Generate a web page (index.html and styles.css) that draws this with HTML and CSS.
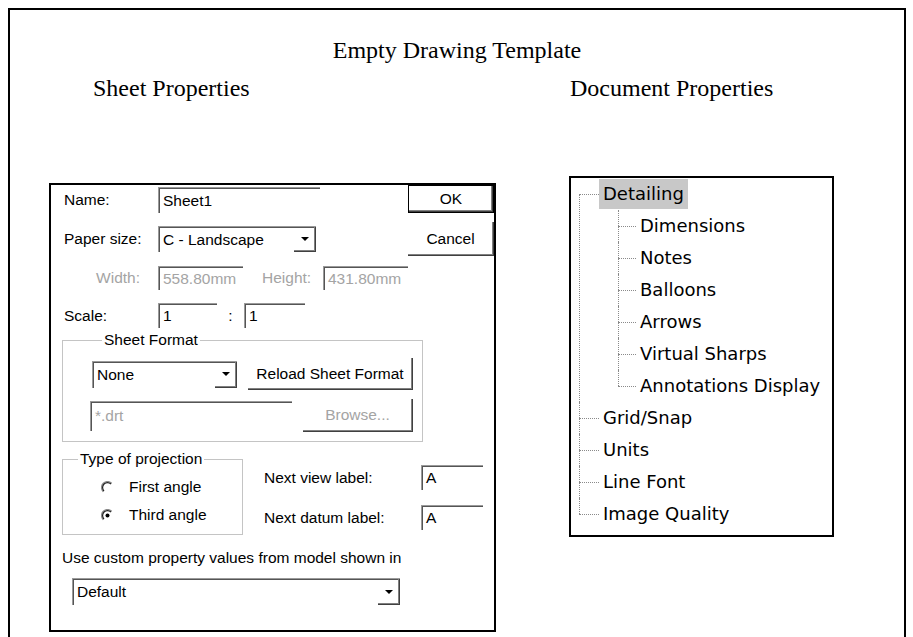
FILE: index.html
```html
<!DOCTYPE html>
<html>
<head>
<meta charset="utf-8">
<title>Empty Drawing Template</title>
<link rel="stylesheet" href="styles.css">
</head>
<body>
<div class="frame">
  <h1 class="title">Empty Drawing Template</h1>
  <div class="cols">
    <section class="col col-left">
      <h2 class="heading heading-left">Sheet Properties</h2>
      <div class="dlg">
        <div class="dlg-top">
          <div class="fields">
            <div class="row row-name">
              <span class="lbl">Name:</span>
              <span class="tb w-name">Sheet1</span>
            </div>
            <div class="row row-paper">
              <span class="lbl">Paper size:</span>
              <span class="dd w-paper"><span class="dd-text">C - Landscape</span><span class="dd-btn"><span class="arrow"></span></span></span>
            </div>
            <div class="row row-size dis">
              <span class="lbl-right">Width:</span>
              <span class="tb w-size">558.80mm</span>
              <span class="lbl-h">Height:</span>
              <span class="tb w-size">431.80mm</span>
            </div>
            <div class="row row-scale">
              <span class="lbl">Scale:</span>
              <span class="tb w-s1">1</span>
              <span class="colon">:</span>
              <span class="tb w-s2">1</span>
            </div>
          </div>
          <div class="btns">
            <div class="btn btn-ok">OK</div>
            <div class="btn btn-cancel">Cancel</div>
          </div>
        </div>
        <fieldset class="grp grp-sheet">
          <legend>Sheet Format</legend>
          <div class="grow grow1">
            <span class="dd w-none"><span class="dd-text">None</span><span class="dd-btn"><span class="arrow"></span></span></span>
            <span class="btn btn-reload">Reload Sheet Format</span>
          </div>
          <div class="grow grow2 dis">
            <span class="tb w-drt">*.drt</span>
            <span class="btn btn-browse">Browse...</span>
          </div>
        </fieldset>
        <div class="proj-row">
          <fieldset class="grp grp-proj">
            <legend>Type of projection</legend>
            <div class="radio">
              <svg class="rb" width="13" height="13" viewBox="0 0 13 13"><path d="M2.25 10.75 A6 6 0 0 1 10.75 2.25" fill="none" stroke="#8c8c8c" stroke-width="1.2"/><path d="M3 10 A4.95 4.95 0 0 1 10 3" fill="none" stroke="#202020" stroke-width="1.2"/></svg>
              <span>First angle</span>
            </div>
            <div class="radio">
              <svg class="rb" width="13" height="13" viewBox="0 0 13 13"><path d="M2.25 10.75 A6 6 0 0 1 10.75 2.25" fill="none" stroke="#8c8c8c" stroke-width="1.2"/><path d="M3 10 A4.95 4.95 0 0 1 10 3" fill="none" stroke="#202020" stroke-width="1.2"/><circle cx="6.5" cy="6.5" r="2" fill="#000"/></svg>
              <span>Third angle</span>
            </div>
          </fieldset>
          <div class="labels">
            <div class="lrow"><span class="lbl-next">Next view label:</span><span class="tb w-next">A</span></div>
            <div class="lrow lrow2"><span class="lbl-next">Next datum label:</span><span class="tb w-next">A</span></div>
          </div>
        </div>
        <p class="custom">Use custom property values from model shown in</p>
        <span class="dd w-default"><span class="dd-text">Default</span><span class="dd-btn"><span class="arrow"></span></span></span>
      </div>
    </section>
    <section class="col col-right">
      <h2 class="heading heading-right">Document Properties</h2>
      <div class="tree">
        <ul class="t1">
          <li><span class="node sel">Detailing</span>
            <ul class="t2">
              <li><span class="node">Dimensions</span></li>
              <li><span class="node">Notes</span></li>
              <li><span class="node">Balloons</span></li>
              <li><span class="node">Arrows</span></li>
              <li><span class="node">Virtual Sharps</span></li>
              <li><span class="node">Annotations Display</span></li>
            </ul>
          </li>
          <li><span class="node">Grid/Snap</span></li>
          <li><span class="node">Units</span></li>
          <li><span class="node">Line Font</span></li>
          <li><span class="node">Image Quality</span></li>
        </ul>
      </div>
    </section>
  </div>
</div>
</body>
</html>
```

FILE: styles.css
```css
html, body {
  margin: 0;
  padding: 0;
  background: #fff;
  overflow: hidden;
}
body {
  font-family: "Liberation Serif", "Times New Roman", serif;
  color: #000;
}
.frame {
  box-sizing: border-box;
  margin: 8px 0 0 8px;
  width: 898px;
  height: 629px;
  border: 2px solid #000;
  border-bottom: none;
}
.title {
  margin: 0;
  padding-top: 25px;
  font-size: 24px;
  font-weight: normal;
  line-height: 30px;
  text-align: center;
}
.cols {
  display: flex;
  align-items: flex-start;
  padding-left: 39px;
  margin-top: 8px;
}
.col-left { width: 447px; }
.col-right { width: 265px; margin-left: 73px; }
.heading {
  margin: 0;
  font-size: 24px;
  font-weight: normal;
  line-height: 30px;
}
.heading-left { margin-left: 44px; }
.heading-right { margin-left: 1px; }

/* dialog */
.dlg {
  box-sizing: border-box;
  width: 447px;
  margin-top: 80px;
  border: 2px solid #000;
  padding: 0 0 25px 11px;
  font-family: "Liberation Sans", Arial, sans-serif;
  font-size: 15.5px;
  line-height: 18px;
}
.dlg-top { display: flex; }
.fields { display: flex; flex-direction: column; }
.row { display: flex; align-items: center; }
.row-name { margin-top: 2px; height: 26px; }
.row-paper { margin-top: 13px; height: 26px; }
.row-size { margin-top: 14px; height: 24px; }
.row-scale { margin-top: 13px; height: 25px; }
.lbl { width: 94px; margin-left: 2px; }
.lbl-right { width: 76px; margin-left: 2px; margin-right: 18px; text-align: right; }
.lbl-h { width: 61px; margin-left: 19px; }
.colon { width: 27px; text-align: center; }
.dis { color: #a4a4a4; }

.tb {
  box-sizing: border-box;
  display: flex;
  align-items: center;
  border-top: 1px solid #9a9a9a;
  border-left: 1px solid #9a9a9a;
  box-shadow: inset 1px 1px 0 #555;
  padding-left: 4px;
  height: 100%;
  white-space: nowrap;
  overflow: hidden;
}
.w-name { width: 162px; height: 26px; }
.w-size { width: 85px; height: 24px; }
.w-s1 { width: 59px; height: 25px; }
.w-s2 { width: 61px; height: 25px; }
.w-drt { width: 202px; height: 30px; margin-left: -2px; }
.w-next { width: 62px; height: 25px; }

.dd {
  box-sizing: border-box;
  display: flex;
  border-top: 1px solid #9a9a9a;
  border-left: 1px solid #9a9a9a;
  box-shadow: inset 1px 1px 0 #555;
}
.dd-text { flex: 1; display: flex; align-items: center; padding-left: 4px; white-space: nowrap; }
.dd-btn {
  box-sizing: border-box;
  width: 22px;
  display: flex;
  align-items: center;
  justify-content: center;
  border-right: 1px solid #404040;
  border-bottom: 1px solid #404040;
  box-shadow: inset -1px -1px 0 #808080;
}
.arrow {
  width: 0;
  height: 0;
  border-left: 4px solid transparent;
  border-right: 4px solid transparent;
  border-top: 4px solid #000;
}
.w-paper { width: 158px; height: 26px; }
.w-none { width: 145px; height: 27px; }
.w-default { width: 328px; height: 27px; margin-left: 10px; }

.btn {
  box-sizing: border-box;
  display: flex;
  align-items: center;
  justify-content: center;
  border-right: 1px solid #404040;
  border-bottom: 1px solid #404040;
  box-shadow: inset -1px -1px 0 #808080;
  white-space: nowrap;
}
.btns { margin-left: auto; width: 110px; display: flex; flex-direction: column; }
.btn-ok {
  height: 28px;
  border: 1px solid #000;
  box-shadow: inset -1px -1px 0 #404040, inset -2px -2px 0 #808080;
}
.btn-cancel { height: 34px; margin-top: 9px; }
.btn-reload { width: 165px; height: 32px; margin-left: 11px; }
.btn-browse { width: 110px; height: 33px; margin-left: 11px; }

.grp {
  box-sizing: border-box;
  margin: 0;
  border: 1px solid #c4c4c4;
  min-width: 0;
}
.grp legend { padding: 0 2px; line-height: 18px; white-space: nowrap; }
.grp-sheet {
  width: 361px;
  margin-top: 3px;
  padding: 9px 9px 9px 29px;
}
.grp-sheet legend { margin-left: 10px; }
.grow { display: flex; align-items: center; }
.grow1 { height: 32px; }
.grow2 { height: 33px; margin-top: 9px; }

.proj-row { display: flex; align-items: flex-start; margin-top: 8px; }
.grp-proj {
  width: 181px;
  padding: 5px 4px 5px 4px;
}
.grp-proj legend { margin-left: 11px; }
.radio { display: flex; align-items: center; height: 28px; padding-left: 34px; }
.rb { display: block; margin-right: 15px; }
.labels { margin-left: 21px; margin-top: 15px; }
.lrow { display: flex; align-items: center; height: 25px; }
.lrow2 { margin-top: 15px; }
.lbl-next { width: 157px; }
.custom { margin: 14px 0 0 0; line-height: 18px; }
.w-default { margin-top: 11px; }

/* tree */
.tree {
  box-sizing: border-box;
  margin-top: 73px;
  width: 265px;
  height: 361px;
  border: 2px solid #000;
  font-family: "DejaVu Sans", Verdana, sans-serif;
  font-size: 18px;
  overflow: hidden;
}
.tree ul { list-style: none; margin: 0; }
.t1 { padding: 0 0 0 8px; }
.t2 { padding: 0 0 0 19px; }
.tree li { position: relative; }
.t1 > li { padding-left: 20px; }
.t2 > li { padding-left: 18px; }
.node {
  display: inline-block;
  height: 30px;
  line-height: 30px;
  margin: 1px 0;
  padding: 0 4px;
  white-space: nowrap;
}
.node.sel { background: #c8c8c8; }
.tree li::before {
  content: "";
  position: absolute;
  left: 0;
  top: 16px;
  border-top: 1px dotted #8a8a8a;
}
.t1 > li::before { width: 20px; }
.t2 > li::before { width: 18px; }
.tree li::after {
  content: "";
  position: absolute;
  left: 0;
  top: 0;
  bottom: 0;
  border-left: 1px dotted #8a8a8a;
}
.t1 > li:first-child::after { top: 16px; }
.tree li:last-child::after { bottom: auto; height: 16px; }
.t1 > li:first-child:last-child::after { height: 0; }
```
